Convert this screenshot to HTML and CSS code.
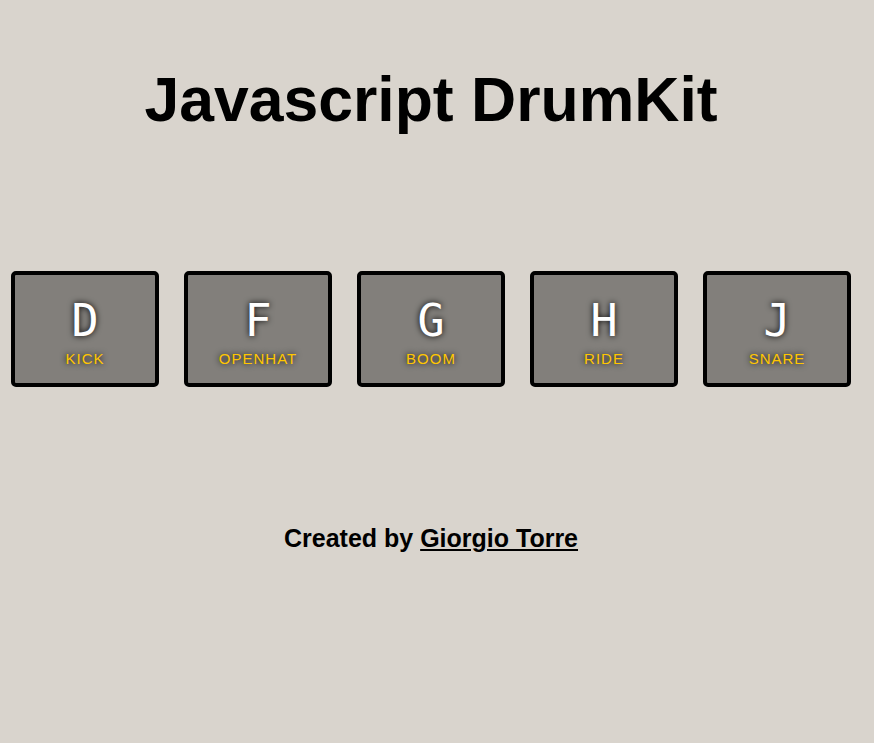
FILE: index.html
```html
<!DOCTYPE html>
<html>
<head>
<meta charset="utf-8">
<title>Javascript DrumKit</title>
<link rel="stylesheet" href="styles.css">
</head>
<body>
<div class="page">
  <h1 class="title">Javascript DrumKit</h1>
  <div class="keys">
    <div class="key"><kbd class="letter">D</kbd><span class="sound">kick</span></div>
    <div class="key"><kbd class="letter">F</kbd><span class="sound">openhat</span></div>
    <div class="key"><kbd class="letter">G</kbd><span class="sound">boom</span></div>
    <div class="key"><kbd class="letter">H</kbd><span class="sound">ride</span></div>
    <div class="key"><kbd class="letter">J</kbd><span class="sound">snare</span></div>
  </div>
  <p class="credit">Created by <a class="credit-link" href="#">Giorgio Torre</a></p>
</div>
</body>
</html>
```
FILE: styles.css
```css
html, body {
  margin: 0;
  padding: 0;
  background: #d9d4cd;
  font-family: "Liberation Sans", Arial, sans-serif;
  height: 100%;
}
.page {
  width: 862px;
  text-align: center;
}
.title {
  margin: 0;
  padding-top: 62px;
  font-size: 62.5px;
  line-height: 74px;
  font-weight: bold;
  color: #000;
}
.keys {
  display: flex;
  justify-content: center;
  gap: 25.5px;
  margin-top: 135px;
}
.key {
  box-sizing: border-box;
  width: 147.5px;
  height: 116px;
  border: 4px solid #000;
  border-radius: 5px;
  background: rgba(0, 0, 0, 0.4);
  color: #fff;
  text-shadow: 0 0 6px #000;
  display: flex;
  flex-direction: column;
  align-items: center;
  padding-top: 20px;
}
.letter {
  display: block;
  font-family: "DejaVu Sans Mono", monospace;
  font-size: 45px;
  line-height: 52px;
}
.sound {
  display: block;
  margin-top: 3px;
  font-size: 15px;
  line-height: 18px;
  letter-spacing: 1px;
  text-transform: uppercase;
  color: #ffc600;
}
.credit {
  margin: 137px 0 0;
  font-size: 25px;
  font-weight: bold;
  line-height: 29px;
  color: #000;
}
.credit-link {
  color: #000;
}
```
